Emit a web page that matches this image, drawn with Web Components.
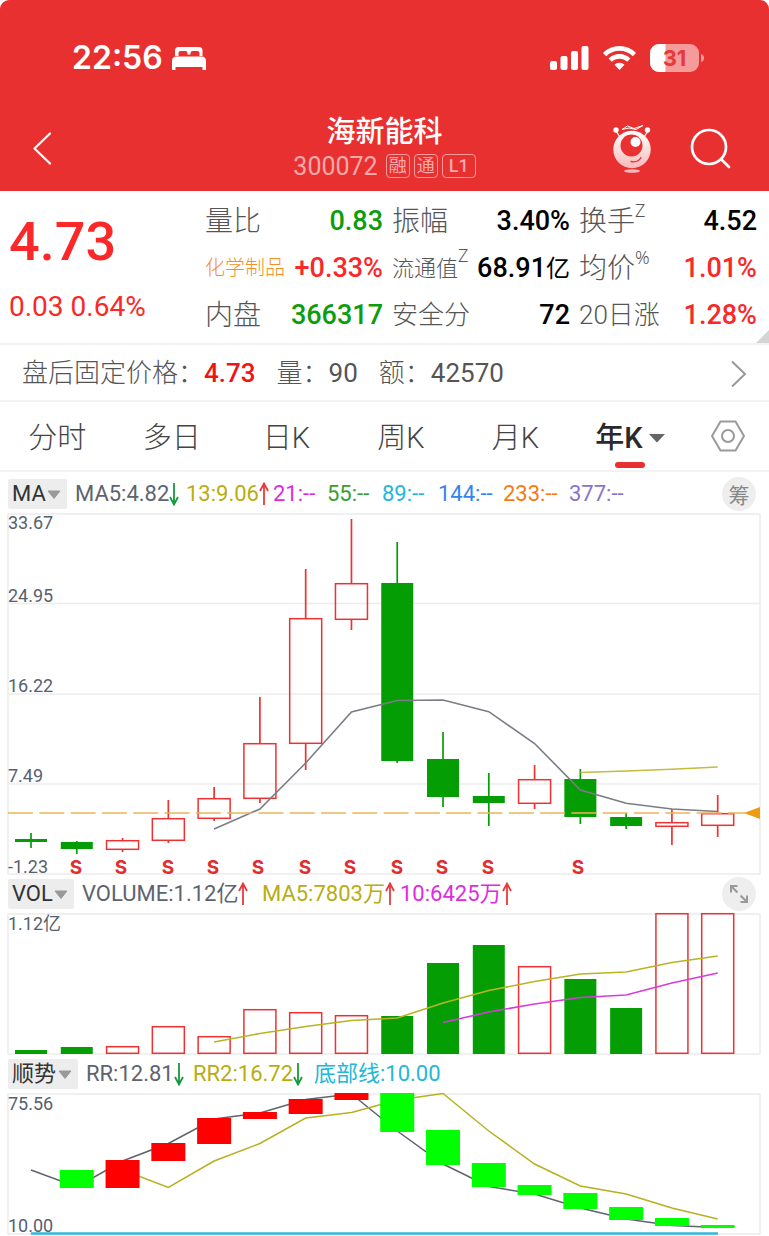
<!DOCTYPE html>
<html lang="zh-CN">
<head>
<meta charset="utf-8">
<meta name="viewport" content="width=device-width, initial-scale=1">
<title>海新能科 300072</title>
<style>
  body { margin: 0; background: #fff; font-family: Roboto, "Noto Sans CJK SC", sans-serif; }
</style>
</head>
<body>
<stock-page></stock-page>
<script>
const define = (name, html, setup) => {
  const template = document.createElement('template');
  template.innerHTML = html;
  customElements.define(name, class extends HTMLElement {
    connectedCallback() {
      if (this.shadowRoot) return;
      this.attachShadow({ mode: 'open' }).append(template.content.cloneNode(true));
      if (setup) setup(this, this.shadowRoot);
    }
  });
};

/* ---------- phone status bar ---------- */
define('status-bar', `
<style>
  :host { display: flex; align-items: center; justify-content: space-between; height: 115px; padding: 0 64px 0 72px; box-sizing: border-box; color: #fff; }
  .side { display: flex; align-items: center; }
  time { font: 600 32px/40px Inter, sans-serif; }
  .left { gap: 9px; } .right { gap: 14px; }
  svg { display: block; }
</style>
<div class="side left"><time>22:56</time>
  <svg width="34" height="24" viewBox="0 0 34 24" fill="#fff"><path d="M3 10V4.500Q3 1 6.500 1H27Q30.500 1 30.500 4.500V10H27.500V7Q27.500 5 25.500 5H20.500Q18.500 5 18.500 7V8.500H15.500V7Q15.500 5 13.500 5H8.500Q6.500 5 6.500 7V10Z"/><path d="M0 15Q0 10.500 4.500 10.500H29.500Q34 10.500 34 15V24H30.500V21H3.500V24H0Z"/></svg>
</div>
<div class="side right">
  <svg width="39" height="24" viewBox="0 0 39 24" fill="#fff"><rect y="15" width="7" height="9" rx="2"/><rect x="10.500" y="10" width="7" height="14" rx="2"/><rect x="21" y="5" width="7" height="19" rx="2"/><rect x="31.500" width="7" height="24" rx="2"/></svg>
  <svg width="33" height="24" viewBox="0 0 33 24" fill="none" stroke="#fff" stroke-width="4.600"><path d="M1.600 8.600a21 21 0 0 1 29.800 0"/><path d="M7.200 14.200a13.200 13.200 0 0 1 18.600 0"/><path d="M16.500 24l-5-5.200a7 7 0 0 1 10 0z" fill="#fff" stroke="none"/></svg>
  <svg width="55" height="28" viewBox="0 0 55 28"><clipPath id="b"><rect width="49" height="28" rx="9"/></clipPath><g clip-path="url(#b)"><rect width="49" height="28" fill="#f59b9b"/><rect width="15.500" height="28" fill="#fff"/></g><path d="M51 10q3 1 3 4t-3 4z" fill="#f59b9b"/><text x="24.500" y="22" text-anchor="middle" font-family="Inter, sans-serif" font-weight="700" font-size="22" fill="#e63a3a">31</text></svg>
</div>`);

/* ---------- title bar ---------- */
define('title-bar', `
<style>
  :host { display: grid; grid-template-columns: 1fr auto 1fr; align-items: center; height: 76px; padding: 0 38px 10px; box-sizing: border-box; color: #fff; }
  button { border: 0; padding: 0; background: none; display: block; }
  .back { width: 24px; margin-left: -8px; }
  svg { display: block; }
  h1 { margin: 0; font-size: 29px; line-height: 34px; font-weight: 500; text-align: center; }
  .code { display: flex; align-items: center; gap: 4px; height: 34px; font-size: 25px; color: #f7aaaa; }
  .code b { margin-right: 4px; font-weight: 400; }
  .code span { box-sizing: border-box; height: 24px; min-width: 24px; padding: 0 2px; border: 1px solid #f39a9a; border-radius: 4px; font-size: 18px; line-height: 22px; text-align: center; }
  .code .l { padding: 0 6px; font-weight: 500; }
  .tools { display: flex; justify-content: flex-end; gap: 37px; align-items: center; }
</style>
<button class="back" aria-label="返回"><svg width="24" height="36" viewBox="0 0 24 36" fill="none" stroke="#fff" stroke-width="2.300" stroke-linecap="round" stroke-linejoin="round"><path d="M20 2.500L4.500 17.500L20 32.500"/></svg></button>
<div><h1>海新能科</h1><div class="code"><b>300072</b><span>融</span><span>通</span><span class="l">L1</span></div></div>
<div class="tools">
  <button aria-label="助手"><svg width="40" height="48" viewBox="0 0 40 48"><defs><linearGradient id="g" x1="0" y1="0" x2="0" y2="1"><stop offset="0" stop-color="#fff"/><stop offset="1" stop-color="#f9b9b9"/></linearGradient></defs><g stroke="#fff" fill="none" stroke-width="1.300"><path d="M4 6l4 6M36 6l-4 6"/><path d="M10 4.500L15.500 1L22 3.500L31 0.500L24 4.500L17 3Z" stroke-width="1"/></g><circle cx="4" cy="5" r="2.700" fill="#fff"/><circle cx="35.500" cy="5" r="2.700" fill="#fff"/><circle cx="20" cy="24.500" r="18.700" fill="url(#g)"/><circle cx="19.500" cy="20.500" r="11" fill="#e93131"/><circle cx="23.500" cy="17" r="5" fill="#fff"/><path d="M19 36.500q7 1.500 10-4" fill="none" stroke="#e93131" stroke-width="1.300" stroke-linecap="round"/><ellipse cx="20" cy="46" rx="8" ry="1.700" fill="#f9b9b9"/></svg></button>
  <button aria-label="搜索"><svg width="42" height="42" viewBox="0 0 42 42" fill="none" stroke="#fff" stroke-width="2.700" stroke-linecap="round"><circle cx="20" cy="19" r="17"/><path d="M32 31l8 8"/></svg></button>
</div>`);

/* ---------- one label / value pair of the quote ---------- */
define('quote-cell', `
<style>
  :host { display: flex; align-items: center; justify-content: space-between; height: 47px; white-space: nowrap; font-size: 27px; line-height: 47px; color: #000; }
  .label { color: #555; font-weight: 300; font-size: var(--label-size, 28px); }
  .value { font-weight: 500; }
  ::slotted(sup) { font-size: 18px; line-height: 0; vertical-align: 14px; font-family: "Noto Sans", sans-serif; font-weight: 300; }
  ::slotted(small) { font-size: 24px; font-weight: 400; }
</style>
<span class="label"><slot name="label"></slot><slot name="mark"></slot></span><span class="value"><slot></slot></span>`);

define('quote-panel', `
<style>
  :host { display: flex; height: 154px; box-sizing: border-box; border-bottom: 2px solid #f3f3f3; padding: 7px 12px 0 9px; position: relative; }
  .price { width: 196px; flex: none; color: #fa2828; }
  .price strong { display: block; font-size: 54px; line-height: 88px; font-weight: 500; }
  .price span { font-size: 28px; line-height: 42px; }
  .grid { flex: 1; display: grid; grid-template-columns: repeat(3, 1fr); column-gap: 9px; align-content: start; }
  .up { color: #fa2828; } .down { color: #0c9c0c; }
  .s26 { --label-size: 26px; } .s22 { --label-size: 22px; } .s20 { --label-size: 20px; }
  .sector { color: #f59028; }
  svg { position: absolute; right: 0; bottom: 0; }
</style>
<div class="price"><strong>4.73</strong><span>0.03 0.64%</span></div>
<div class="grid">
  <quote-cell class="down"><span slot="label">量比</span>0.83</quote-cell>
  <quote-cell><span slot="label">振幅</span>3.40%</quote-cell>
  <quote-cell><span slot="label">换手</span><sup slot="mark">Z</sup>4.52</quote-cell>
  <quote-cell class="up s20"><span slot="label" class="sector">化学制品</span>+0.33%</quote-cell>
  <quote-cell class="s22"><span slot="label">流通值</span><sup slot="mark">Z</sup>68.91<small>亿</small></quote-cell>
  <quote-cell class="up"><span slot="label">均价</span><sup slot="mark">%</sup>1.01%</quote-cell>
  <quote-cell class="down"><span slot="label">内盘</span>366317</quote-cell>
  <quote-cell class="s26"><span slot="label">安全分</span>72</quote-cell>
  <quote-cell class="up s26"><span slot="label">20日涨</span>1.28%</quote-cell>
</div>
<svg width="13" height="13"><path d="M13 0V13H0Z" fill="#d4d4d4"/></svg>`);

/* ---------- after-hours line ---------- */
define('after-hours', `
<style>
  :host { display: block; }
  a { display: flex; align-items: center; height: 57px; box-sizing: border-box; padding: 2px 22px 0; border-bottom: 2px solid #f3f3f3; color: #555; font-size: 26px; line-height: 53px; text-decoration: none; gap: 21px; white-space: nowrap; }
  span { font-weight: 300; }
  b { font-weight: 400; } .up { color: #f01414; font-weight: 500; }
  svg { margin-left: auto; }
</style>
<a href="#after-hours"><span>盘后固定价格：<b class="up">4.73</b></span><span>量：<b>90</b></span><span>额：<b>42570</b></span>
<svg width="17" height="28" viewBox="0 0 17 28" fill="none" stroke="#999" stroke-width="2"><path d="M2 1.500L15 14L2 26.500"/></svg></a>`);

/* ---------- period tabs ---------- */
define('period-tabs', `
<style>
  :host { display: grid; grid-template-columns: repeat(6, 7fr) 5fr; height: 70px; box-sizing: border-box; border-bottom: 2px solid #f3f3f3; }
  button { font: 300 29px/64px Roboto, "Noto Sans CJK SC", sans-serif; color: #444; border: 0; padding: 4px 0 0; background: none; display: flex; align-items: center; justify-content: center; gap: 6px; position: relative; }
  .on { color: #2a2a2a; font-weight: 500; }
  .on::after { content: ""; position: absolute; left: calc(50% - 15px); bottom: 2px; width: 30px; height: 6px; border-radius: 3px; background: #e93030; }
  .set { padding: 0; }
</style>
<button>分时</button><button>多日</button><button>日K</button><button>周K</button><button>月K</button>
<button class="on">年K<svg width="16" height="10"><path d="M0 1H16L8 9.500Z" fill="#666"/></svg></button>
<button class="set" aria-label="设置"><svg width="34" height="32" viewBox="0 0 34 32" fill="none" stroke="#999" stroke-width="2"><path d="M9.500 1.500H24.500L33 16L24.500 30.500H9.500L1 16Z" stroke-linejoin="round"/><circle cx="17" cy="16" r="6"/></svg></button>`);

/* ---------- indicator value with an optional trend arrow ---------- */
define('indicator-value', `
<style>
  :host { display: flex; align-items: center; font-size: 22px; line-height: 30px; white-space: nowrap; }
  svg { display: none; }
  :host([trend]) svg { display: block; }
  :host([trend="up"]) svg { color: #e83a3a; }
  :host([trend="down"]) svg { color: #189a3c; transform: rotate(180deg); }
</style>
<span><slot></slot></span><svg width="10" height="24" viewBox="0 0 10 24" fill="none" stroke="currentColor" stroke-width="1.800"><path d="M5 23V2M1 9L5 1.500L9 9"/></svg>`);

define('indicator-bar', `
<style>
  :host { display: flex; align-items: center; height: 38px; padding: 0 13px 0 8px; }
  label { position: relative; display: flex; flex: none; margin-right: 8px; }
  select { appearance: none; border: 0; margin: 0; height: 30px; padding: 0 21px 0 4px; background: #ededed; border-radius: 2px; color: #333; font: 400 22px/30px Roboto, "Noto Sans CJK SC", sans-serif; }
  label svg { position: absolute; right: 6px; top: 11px; pointer-events: none; }
  .values { display: grid; flex: 1; }
  button { border: 0; padding: 0; width: 34px; height: 34px; flex: none; border-radius: 50%; background: #eee; color: #888; font: 400 21px/34px "Noto Sans CJK SC", sans-serif; display: flex; justify-content: center; align-items: center; }
</style>
<label><select aria-label="指标"><option></option></select><svg width="14" height="10"><path d="M1 1H13L7 8.500Z" fill="#999" stroke="#999" stroke-linejoin="round"/></svg></label>
<div class="values"><slot></slot></div>
<button></button>`, (host, root) => {
  root.querySelector('option').textContent = host.getAttribute('name');
  root.querySelector('.values').style.gridTemplateColumns = host.getAttribute('columns');
  const button = root.querySelector('button');
  const action = host.getAttribute('action');
  if (!action) button.remove();
  else if (action === 'expand') {
    button.setAttribute('aria-label', '全屏');
    button.innerHTML = '<svg width="20" height="20" viewBox="0 0 20 20" fill="none" stroke="#999" stroke-width="2"><path d="M2 8.500V2H8.500M2 2L8.500 8.500M18 11.500V18H11.500M18 18L11.500 11.500"/></svg>';
  } else button.textContent = action;
});

/* ---------- charts ---------- */
const X = i => 31 + 45.78 * i;
const RED = '#ee3232', GREEN = '#049e04';
const line = (start, ys, color, w = 1.6) =>
  `<polyline fill="none" stroke="${color}" stroke-width="${w}" points="${ys.map((y, i) => X(i + start) + ',' + y).join(' ')}"/>`;
const label = (y, t) => `<text x="8" y="${y}" fill="#56616f" font-size="18">${t}</text>`;
const frame = (bottom, rows = []) => `<g fill="none" stroke="#ececec" stroke-width="1.500"><rect x="8" y="1" width="752" height="${bottom - 1}"/>${rows.map(y => `<path d="M8 ${y}H760"/>`).join('')}</g>`;
const box = (i, top, bottom, rising) => rising
  ? `<rect x="${X(i) - 16}" y="${top + 0.7}" width="32" height="${Math.max(bottom - top - 1.4, 1)}" fill="none" stroke="${RED}" stroke-width="1.500"/>`
  : `<rect x="${X(i) - 16}" y="${top}" width="32" height="${bottom - top}" fill="${GREEN}"/>`;

const charts = {
  price: { height: 362, draw() {
    // [rising, high, body top, body bottom, low]
    const candles = [[0,320,326,329,335],[0,328,329,336,341],[1,325,327,337,339],[1,287,305,328,330],[1,274,285,306,308],[1,184,230,286,290],[1,56,105,231,257],[1,6,70,107,117],[0,29,70,248,250],[0,219,246,284,294],[0,260,283,290,313],[1,252,266,291,296],[0,256,266,304,311],[0,300,304,313,316],[1,296,309,314,332],[1,282,300,313,324]];
    const bars = candles.map(([up, h, t, b, l], i) => {
      const c = up ? RED : GREEN;
      return `<path d="M${X(i)} ${h}V${t}M${X(i)} ${b}V${l}" stroke="${c}" stroke-width="1.700"/>` + box(i, t, b, up);
    }).join('');
    const marks = [76,121,168,213,258,305,350,397,442,488,578].map(x => `<text x="${x}" y="361" text-anchor="middle" font-size="19" font-weight="700" font-family="Inter, sans-serif" fill="#e02d2d">S</text>`).join('');
    return frame(361, [90.5, 181, 271]) + bars
      + line(4, [316,296,250,199,187.5,187,198.7,230.5,277,290.3,296,298.5], '#7b7d86')
      + line(12, [259.5,258,256.3,254], '#c5bb3f')
      + '<path d="M8 300H745" stroke="#eab559" stroke-width="1.700" stroke-dasharray="25 6.300"/><path d="M744 300L760 294V306Z" fill="#ef9b12"/>'
      + label(16, '33.67') + label(89, '24.95') + label(179, '16.22') + label(269, '7.49') + label(360, '-1.23') + marks;
  } },
  volume: { height: 142, draw() {
    // [rising, bar top]
    const bars = [[0,137],[0,134],[1,133],[1,113],[1,123],[1,96],[1,99],[1,102],[0,103],[0,50],[0,32],[1,53],[0,66],[0,95],[1,0],[1,0]];
    return frame(141) + bars.map(([up, t], i) => box(i, t, 141, up)).join('')
      + line(4, [129,120.5,113.5,107.5,105,90,77.5,68.5,61,59,49.5,43], '#b9b424')
      + line(9, [109.5,99,91,84.5,82,70,60], '#d93ade')
      + label(17, '1.12亿');
  } },
  trend: { height: 143, draw() {
    // [rising, top, bottom], from the second year on
    const blocks = [[0,77,95],[1,67,95],[1,50,68],[1,25,51],[1,19,26],[1,6,21],[1,0,7],[0,0,39],[0,37,72],[0,70,94],[0,92,102],[0,100,116],[0,114,127],[0,125,133],[0,132,135]];
    return frame(141)
      + line(0, [77,94,68,50.5,26,20,6.5,1,38,71,93.5,101,115,126,132.5,134.5], '#5f636f', 1.5)
      + line(2, [77,94.5,68,50.5,25,19.5,7,0.5,38,71,93,101,115,126], '#b8b021', 1.5)
      + blocks.map(([up, t, b], i) => `<rect x="${X(i + 1) - 17}" y="${t}" width="34" height="${b - t}" fill="${up ? '#f00' : '#0f0'}"/>`).join('')
      + '<path d="M31 140.500H718" stroke="#30b9dc" stroke-width="2.500"/>'
      + label(17, '75.56') + label(139, '10.00');
  } }
};

define('stock-chart', `
<style>
  :host { display: block; }
  svg { display: block; width: 100%; height: auto; overflow: visible; font-family: Roboto, "Noto Sans CJK SC", sans-serif; font-weight: 400; }
</style>
<svg role="img"></svg>`, (host, root) => {
  const chart = charts[host.getAttribute('type')];
  const svg = root.querySelector('svg');
  svg.setAttribute('viewBox', `0 0 769 ${chart.height}`);
  svg.innerHTML = chart.draw();
});

/* ---------- page ---------- */
define('stock-page', `
<style>
  :host { display: block; }
  header { background: #e93030; border-radius: 9px 9px 0 0; }
  .first { padding-top: 3px; }
  .gray { color: #5c6470; } .yellow { color: #b8ad12; } .magenta { color: #dd2be0; } .green { color: #38a02a; }
  .cyan { color: #22b8d8; } .blue { color: #3484ec; } .orange { color: #fa7a12; } .purple { color: #8973cb; }
</style>
<header><status-bar></status-bar><title-bar></title-bar></header>
<main>
  <quote-panel></quote-panel>
  <after-hours></after-hours>
  <period-tabs></period-tabs>
  <indicator-bar class="first" name="MA" action="筹" columns="111px 87px 54px 55px 56px 65px 66px 1fr">
    <indicator-value class="gray" trend="down">MA5:4.82</indicator-value><indicator-value class="yellow" trend="up">13:9.06</indicator-value><indicator-value class="magenta">21:--</indicator-value><indicator-value class="green">55:--</indicator-value><indicator-value class="cyan">89:--</indicator-value><indicator-value class="blue">144:--</indicator-value><indicator-value class="orange">233:--</indicator-value><indicator-value class="purple">377:--</indicator-value>
  </indicator-bar>
  <stock-chart type="price"></stock-chart>
  <indicator-bar name="VOL" action="expand" columns="180px 138px 1fr">
    <indicator-value class="gray" trend="up">VOLUME:1.12亿</indicator-value><indicator-value class="yellow" trend="up">MA5:7803万</indicator-value><indicator-value class="magenta" trend="up">10:6425万</indicator-value>
  </indicator-bar>
  <stock-chart type="volume"></stock-chart>
  <indicator-bar name="顺势" columns="107px 121px 1fr">
    <indicator-value class="gray" trend="down">RR:12.81</indicator-value><indicator-value class="yellow" trend="down">RR2:16.72</indicator-value><indicator-value class="cyan">底部线:10.00</indicator-value>
  </indicator-bar>
  <stock-chart type="trend"></stock-chart>
</main>`);
</script>
</body>
</html>
